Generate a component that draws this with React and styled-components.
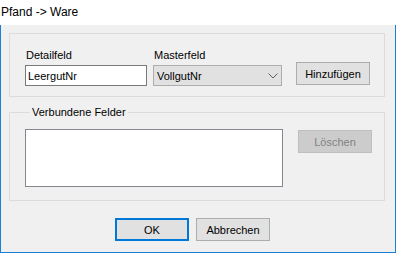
import React from "react";
import styled, { createGlobalStyle } from "styled-components";

const GlobalStyle = createGlobalStyle`
  html, body {
    margin: 0;
    padding: 0;
    background: #ffffff;
  }
  * {
    box-sizing: border-box;
  }
`;

const Window = styled.div`
  width: 396px;
  height: 253px;
  display: flex;
  flex-direction: column;
  font-family: "Liberation Sans", Arial, sans-serif;
  font-size: 11px;
  color: #000000;
`;

const TitleBar = styled.div`
  height: 25px;
  line-height: 25px;
  padding-left: 1px;
  background: #ffffff;
  font-size: 12px;
`;

const Body = styled.div`
  flex: 1;
  display: flex;
  flex-direction: column;
  background: #f0f0f0;
  border: 1px solid #1a7fd6;
  border-top: none;
  padding: 8px 10px 0 8px;
`;

const GroupBox = styled.div`
  height: 64px;
  border: 1px solid #dcdcdc;
  padding: 15px 0 0 15px;
  display: flex;
  align-items: flex-start;
`;

const Field = styled.div`
  display: flex;
  flex-direction: column;
  margin-right: ${(p) => p.$gap || 0}px;
`;

const Label = styled.label`
  line-height: 13px;
  padding-left: 1px;
  margin-bottom: 3px;
`;

const TextBox = styled.input`
  width: ${(p) => p.$width}px;
  height: 21px;
  border: 1px solid #7a7a7a;
  background: #ffffff;
  padding: 0 2px;
  margin: 0;
  font-family: inherit;
  font-size: 11px;
  color: #000000;
  outline: none;
`;

const Combo = styled.div`
  width: 129px;
  height: 21px;
  border: 1px solid #adadad;
  background: #e1e1e1;
  display: flex;
  align-items: center;
  justify-content: space-between;
  padding: 0 3px 0 3px;
`;

const Button = styled.button`
  width: 74px;
  height: 23px;
  margin: 0;
  margin-top: ${(p) => p.$top || 0}px;
  padding: 0;
  font-family: inherit;
  font-size: 11px;
  color: ${(p) => (p.disabled ? "#838383" : "#000000")};
  background: ${(p) => (p.disabled ? "#cccccc" : "#e1e1e1")};
  border: ${(p) =>
    p.$default ? "2px solid #0078d7" : p.disabled ? "1px solid #bfbfbf" : "1px solid #adadad"};
`;

const Fieldset = styled.fieldset`
  margin: 9px 0 0 0;
  padding: 10px 0 13px 15px;
  border: 1px solid #dcdcdc;
  min-width: 0;
  display: flex;
  align-items: flex-start;
  gap: 15px;
`;

const Legend = styled.legend`
  margin-left: 5px;
  padding: 0 2px;
  line-height: 13px;
`;

const ListBox = styled.div`
  width: 258px;
  height: 58px;
  border: 1px solid #828790;
  background: #ffffff;
`;

const ButtonRow = styled.div`
  display: flex;
  gap: 7px;
  margin-top: 17px;
  padding-left: 106px;
`;

function Chevron() {
  return (
    <svg width="10" height="6" viewBox="0 0 10 6">
      <polyline points="0.5,0.5 5,5 9.5,0.5" fill="none" stroke="#606060" strokeWidth="1" />
    </svg>
  );
}

export default function App() {
  return (
    <Window>
      <GlobalStyle />
      <TitleBar>Pfand -&gt; Ware</TitleBar>
      <Body>
        <GroupBox>
          <Field $gap={6}>
            <Label>Detailfeld</Label>
            <TextBox $width={122} value="LeergutNr" readOnly />
          </Field>
          <Field $gap={14}>
            <Label>Masterfeld</Label>
            <Combo role="combobox">
              <span>VollgutNr</span>
              <Chevron />
            </Combo>
          </Field>
          <Button $top={13}>Hinzufügen</Button>
        </GroupBox>
        <Fieldset>
          <Legend>Verbundene Felder</Legend>
          <ListBox />
          <Button $top={1} disabled>
            Löschen
          </Button>
        </Fieldset>
        <ButtonRow>
          <Button $default>OK</Button>
          <Button>Abbrechen</Button>
        </ButtonRow>
      </Body>
    </Window>
  );
}
